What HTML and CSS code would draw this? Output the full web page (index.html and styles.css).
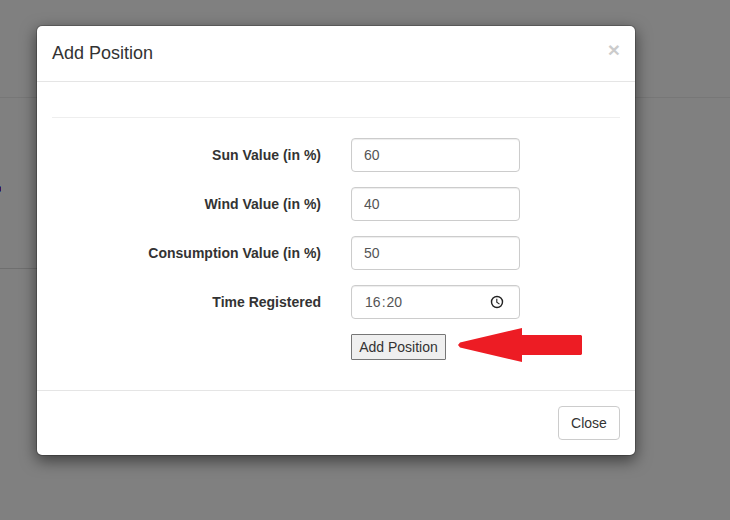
FILE: index.html
```html
<!DOCTYPE html>
<html lang="en">
<head>
<meta charset="utf-8">
<title>Add Position</title>
<link rel="stylesheet" href="styles.css">
</head>
<body>
<div class="page">
  <div class="page-head"></div>
  <div class="page-panel"><i class="page-link"></i></div>
</div>
<div class="backdrop">
  <div class="modal" role="dialog">
    <div class="modal-header">
      <h4 class="modal-title">Add Position</h4>
      <button type="button" class="dismiss">×</button>
    </div>
    <div class="modal-body">
      <hr class="rule">
      <form class="form">
        <label class="label" for="sun">Sun Value (in %)</label>
        <input class="control" id="sun" value="60">
        <label class="label" for="wind">Wind Value (in %)</label>
        <input class="control" id="wind" value="40">
        <label class="label" for="use">Consumption Value (in %)</label>
        <input class="control" id="use" value="50">
        <span class="label">Time Registered</span>
        <div class="control time">
          <span class="digits"><span>16</span><span class="colon">:</span><span>20</span></span>
          <svg class="clock" viewBox="0 0 14 14" fill="none" stroke="#222"><circle cx="7" cy="7" r="5.5" stroke-width="1.4"/><path d="M6.8 3.7v3.6l2.7 1.8" stroke-width="1.1"/></svg>
        </div>
        <div class="action">
          <button type="button" class="submit">Add Position</button>
          <svg class="arrow" viewBox="0 0 124 34" fill="#ed1c24"><path d="M0 17 2 14.5 64 0V7H123L124 8V26L123 27H64V34L2 19.5Z"/></svg>
        </div>
      </form>
    </div>
    <div class="modal-footer">
      <button type="button" class="close">Close</button>
    </div>
  </div>
</div>
</body>
</html>
```
FILE: styles.css
```css
* { box-sizing: border-box; }
body {
  margin: 0;
  height: 520px;
  overflow: hidden;
  position: relative;
  background: #808080;
  color: #333;
  font: 14px/20px "Liberation Sans", Arial, sans-serif;
}
button, input { font: inherit; color: inherit; margin: 0; }

.page-head { height: 98px; border-bottom: 1px solid #777; }
.page-panel {
  width: 60px;
  height: 171px;
  padding-top: 88px;
  border-bottom: 1px solid #6f6f6f;
}
.page-link {
  display: block;
  width: 1px;
  height: 6px;
  background: #35135c;
  border: solid #2d5c84;
  border-width: 1px 0;
}

.backdrop { position: absolute; inset: 0; padding: 25px 0 0 36px; }
.modal {
  width: 600px;
  height: 431px;
  background: #fff;
  background-clip: padding-box;
  border: 1px solid rgba(0, 0, 0, .2);
  border-radius: 6px;
  box-shadow: 0 5px 15px rgba(0, 0, 0, .5);
}
.modal-header {
  display: flex;
  justify-content: space-between;
  height: 56px;
  padding: 15px;
  border-bottom: 1px solid #e5e5e5;
}
.modal-title { margin: 0; font-size: 18px; font-weight: 500; line-height: 25px; }
.dismiss {
  height: 21px;
  margin-top: -2px;
  padding: 0;
  border: 0;
  background: none;
  color: #000;
  font-size: 21px;
  font-weight: 700;
  line-height: 21px;
  opacity: .2;
}

.modal-body { height: 308px; padding: 15px; }
.rule { margin: 20px 0; border: 0; border-top: 1px solid #eee; }
.form {
  display: grid;
  grid-template-columns: 269px 169px;
  column-gap: 30px;
  row-gap: 15px;
}
.label { padding-top: 7px; text-align: right; font-weight: 700; }
.control {
  width: 169px;
  height: 34px;
  padding: 6px 12px;
  border: 1px solid #ccc;
  border-radius: 4px;
  background: #fff;
  color: #555;
  box-shadow: inset 0 1px 1px rgba(0, 0, 0, .075);
}
.time {
  display: flex;
  align-items: center;
  justify-content: space-between;
  padding: 0 15px 0 13px;
}
.digits { display: flex; }
.colon { width: 6px; text-align: center; }
.clock { width: 14px; height: 14px; }
.action { grid-column: 2; display: flex; height: 26px; }
.submit {
  flex: none;
  width: 95px;
  height: 26px;
  padding: 0;
  border: 1px solid #767676;
  border-radius: 1px;
  background: #efefef;
}
.arrow { flex: none; width: 124px; height: 34px; margin: -6px 0 0 12px; }

.modal-footer {
  display: flex;
  justify-content: flex-end;
  height: 65px;
  padding: 15px;
  border-top: 1px solid #e5e5e5;
}
.close {
  width: 62px;
  height: 34px;
  padding: 0;
  border: 1px solid #ccc;
  border-radius: 4px;
  background: #fff;
}
```
